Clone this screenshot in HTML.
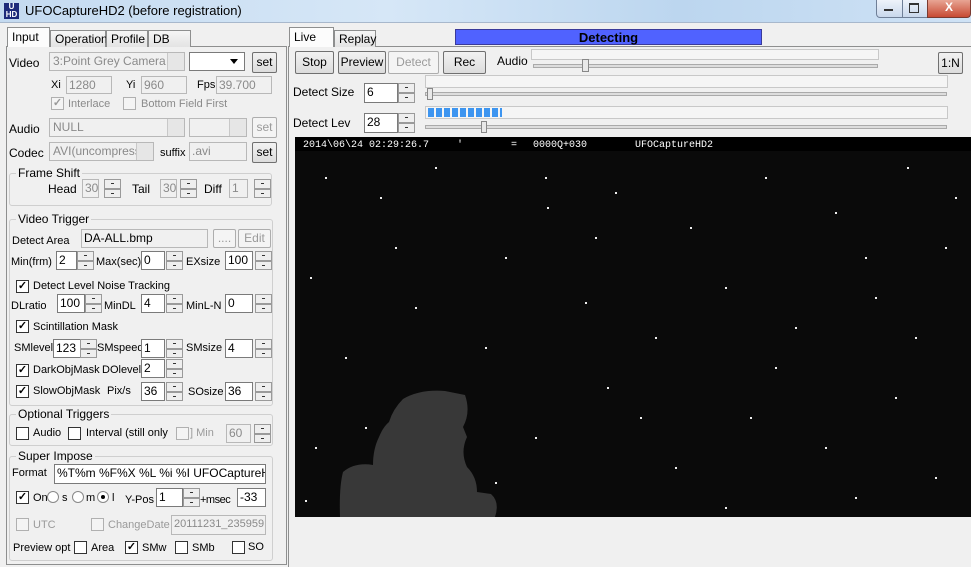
<!DOCTYPE html>
<html><head><meta charset="utf-8"><style>
body{margin:0;width:971px;height:567px;background:#f0f0f0;font:11px "Liberation Sans",sans-serif;position:relative;overflow:hidden;color:#000}
.a{position:absolute;white-space:nowrap;line-height:14px}
.e{position:absolute;background:#fff;border:1px solid #7a7a7a;box-sizing:border-box;padding:1px 2px;line-height:15px;font-size:12px;white-space:nowrap;overflow:hidden}
.d{background:#f0f0f0;border-color:#b8b8b8;color:#8a8a8a}
.b{position:absolute;box-sizing:border-box;border:1px solid #707070;border-radius:2px;background:linear-gradient(#f2f2f2,#dcdcdc);text-align:center;font-size:12px;white-space:nowrap}
.bd{color:#9a9a9a;border-color:#adadad;background:#f4f4f4}
.sp{position:absolute;width:17px;box-sizing:border-box}
.sp i{display:block;box-sizing:border-box;border:1px solid #9a9a9a;background:#eee;height:50%;position:relative}
.sp i:after{content:"";position:absolute;left:6px;top:3px;width:3px;height:1px;background:#333}
.cb{position:absolute;width:13px;height:13px;box-sizing:border-box;border:1px solid #333;background:#fff;font-size:11px;line-height:11px;text-align:center;font-weight:bold}
.cbd{border-color:#b0b0b0;background:#f4f4f4;color:#999}
.g{position:absolute;border:1px solid #cfcfcf;border-radius:3px;box-sizing:border-box}
.gt{position:absolute;background:#f0f0f0;padding:0 2px;line-height:14px;top:-8px;left:6px;font-size:12px}
.rd{position:absolute;width:12px;height:12px;border:1px solid #888;border-radius:50%;box-sizing:border-box;background:#fff}
.cmb{position:absolute;box-sizing:border-box;border:1px solid #b8b8b8;background:#f0f0f0;color:#8a8a8a;padding:1px 3px;line-height:15px;overflow:hidden;font-size:12px}
.cmb:after{content:"";position:absolute;right:0;top:0;bottom:0;width:16px;background:#e6e6e6;border-left:1px solid #c8c8c8}
.tab{position:absolute;box-sizing:border-box;border:1px solid #8e8f8f;border-bottom:none;background:linear-gradient(#f6f6f6,#e3e3e3);padding:2px 4px;line-height:14px;font-size:12px}
.sel{background:#fcfcfc;z-index:2}
</style></head><body>
<div class="a" style="left:0;top:0;width:971px;height:22px;background:linear-gradient(90deg,#c4daf0,#d6e7f7 40%,#bcd6ef 70%,#cfe2f5)"></div>
<div class="a" style="left:4px;top:3px;width:15px;height:16px;background:#1d2a7a;color:#fff;font-size:8px;line-height:8px;text-align:center;font-weight:bold">U<br>HD</div>
<div class="a" style="left:25px;top:3px;font-size:13px;line-height:16px">UFOCaptureHD2 (before registration)</div>
<div class="a" style="left:876px;top:0;width:25px;height:17px;border:1px solid #6f7f97;border-top:none;border-radius:0 0 0 4px;background:linear-gradient(#eef3fa,#c9d8ec)"></div>
<div class="a" style="left:902px;top:0;width:24px;height:17px;border:1px solid #6f7f97;border-top:none;background:linear-gradient(#eef3fa,#c9d8ec)"></div>
<div class="a" style="left:927px;top:0;width:42px;height:17px;border:1px solid #7a3a30;border-top:none;border-radius:0 0 4px 0;background:linear-gradient(#e8a594,#c74a33);color:#fff;font-weight:bold;text-align:center;line-height:14px;font-size:12px">X</div>
<div class="a" style="left:884px;top:9px;width:9px;height:2px;background:#333"></div>
<div class="a" style="left:909px;top:3px;width:8px;height:7px;border:1px solid #333;border-top-width:2px"></div>
<div class="a" style="left:0;top:22px;width:971px;height:1px;background:#a8b8cc"></div>

<div class="a" style="left:6px;top:46px;width:281px;height:519px;border:1px solid #8e8f8f;box-sizing:border-box;background:#f0f0f0"></div>
<div class="tab sel" style="left:7px;top:27px;width:43px;height:20px">Input</div>
<div class="tab" style="left:50px;top:30px;width:56px;height:17px;padding-top:1px">Operation</div>
<div class="tab" style="left:106px;top:30px;width:42px;height:17px;padding-top:1px">Profile</div>
<div class="tab" style="left:148px;top:30px;width:43px;height:17px;padding-top:1px">DB</div>

<div class="a" style="left:9px;top:56px;font-size:12px">Video</div>
<div class="cmb" style="left:49px;top:52px;width:136px;height:19px">3:Point Grey Camera</div>
<div class="e" style="left:189px;top:52px;width:56px;height:19px"></div>
<div class="a" style="left:230px;top:59px;width:0;height:0;border:4px solid transparent;border-top:5px solid #000"></div>
<div class="b" style="left:252px;top:52px;width:25px;height:21px;line-height:19px">set</div>
<div class="a" style="left:51px;top:78px">Xi</div><div class="e d" style="left:66px;top:76px;width:46px;height:18px">1280</div>
<div class="a" style="left:126px;top:78px">Yi</div><div class="e d" style="left:141px;top:76px;width:46px;height:18px">960</div>
<div class="a" style="left:197px;top:78px">Fps</div><div class="e d" style="left:216px;top:76px;width:56px;height:18px">39.700</div>
<div class="cb cbd" style="left:51px;top:97px">✓</div><div class="a" style="left:68px;top:97px;color:#8a8a8a">Interlace</div>
<div class="cb cbd" style="left:123px;top:97px"></div><div class="a" style="left:141px;top:97px;color:#8a8a8a">Bottom Field First</div>
<div class="a" style="left:9px;top:122px;font-size:12px">Audio</div>
<div class="cmb" style="left:49px;top:118px;width:136px;height:19px">NULL</div>
<div class="cmb" style="left:189px;top:118px;width:58px;height:19px"></div>
<div class="b bd" style="left:252px;top:117px;width:25px;height:21px;line-height:19px">set</div>
<div class="a" style="left:9px;top:146px;font-size:12px">Codec</div>
<div class="cmb" style="left:49px;top:142px;width:105px;height:19px">AVI(uncompressed</div>
<div class="a" style="left:160px;top:146px">suffix</div>
<div class="e d" style="left:189px;top:142px;width:58px;height:19px">.avi</div>
<div class="b" style="left:252px;top:142px;width:25px;height:21px;line-height:19px">set</div>

<div class="g" style="left:9px;top:173px;width:263px;height:33px"><span class="gt">Frame Shift</span></div>
<div class="a" style="left:48px;top:182px;font-size:12px">Head</div><div class="e d" style="left:82px;top:179px;width:17px;height:19px">30</div><div class="sp" style="left:104px;top:179px;height:19px"><i></i><i></i></div>
<div class="a" style="left:132px;top:182px;font-size:12px">Tail</div><div class="e d" style="left:160px;top:179px;width:17px;height:19px">30</div><div class="sp" style="left:180px;top:179px;height:19px"><i></i><i></i></div>
<div class="a" style="left:204px;top:182px;font-size:12px">Diff</div><div class="e d" style="left:229px;top:179px;width:19px;height:19px">1</div><div class="sp" style="left:254px;top:179px;height:19px"><i></i><i></i></div>

<div class="g" style="left:9px;top:219px;width:264px;height:187px"><span class="gt">Video Trigger</span></div>
<div class="a" style="left:12px;top:234px">Detect Area</div><div class="e d" style="left:81px;top:229px;width:127px;height:19px;color:#000">DA-ALL.bmp</div>
<div class="b bd" style="left:213px;top:229px;width:23px;height:19px;line-height:17px">....</div>
<div class="b bd" style="left:238px;top:229px;width:33px;height:19px;line-height:17px">Edit</div>
<div class="a" style="left:11px;top:255px">Min(frm)</div><div class="e" style="left:56px;top:251px;width:21px;height:19px">2</div><div class="sp" style="left:77px;top:251px;height:19px"><i></i><i></i></div>
<div class="a" style="left:96px;top:255px">Max(sec)</div><div class="e" style="left:141px;top:251px;width:24px;height:19px">0</div><div class="sp" style="left:166px;top:251px;height:19px"><i></i><i></i></div>
<div class="a" style="left:186px;top:255px">EXsize</div><div class="e" style="left:225px;top:251px;width:28px;height:19px">100</div><div class="sp" style="left:255px;top:251px;height:19px"><i></i><i></i></div>
<div class="cb" style="left:16px;top:280px">✓</div><div class="a" style="left:33px;top:279px">Detect Level Noise Tracking</div>
<div class="a" style="left:11px;top:299px">DLratio</div><div class="e" style="left:57px;top:294px;width:28px;height:19px">100</div><div class="sp" style="left:85px;top:294px;height:19px"><i></i><i></i></div>
<div class="a" style="left:104px;top:299px">MinDL</div><div class="e" style="left:141px;top:294px;width:24px;height:19px">4</div><div class="sp" style="left:166px;top:294px;height:19px"><i></i><i></i></div>
<div class="a" style="left:186px;top:299px">MinL-N</div><div class="e" style="left:225px;top:294px;width:28px;height:19px">0</div><div class="sp" style="left:255px;top:294px;height:19px"><i></i><i></i></div>
<div class="cb" style="left:16px;top:320px">✓</div><div class="a" style="left:33px;top:320px">Scintillation Mask</div>
<div class="a" style="left:14px;top:341px">SMlevel</div><div class="e" style="left:53px;top:339px;width:28px;height:19px">123</div><div class="sp" style="left:80px;top:339px;height:19px"><i></i><i></i></div>
<div class="a" style="left:97px;top:341px">SMspeed</div><div class="e" style="left:141px;top:339px;width:24px;height:19px">1</div><div class="sp" style="left:166px;top:339px;height:19px"><i></i><i></i></div>
<div class="a" style="left:186px;top:341px">SMsize</div><div class="e" style="left:225px;top:339px;width:28px;height:19px">4</div><div class="sp" style="left:255px;top:339px;height:19px"><i></i><i></i></div>
<div class="cb" style="left:16px;top:364px">✓</div><div class="a" style="left:33px;top:363px">DarkObjMask</div>
<div class="a" style="left:102px;top:363px">DOlevel</div><div class="e" style="left:141px;top:359px;width:24px;height:19px">2</div><div class="sp" style="left:166px;top:359px;height:19px"><i></i><i></i></div>
<div class="cb" style="left:16px;top:385px">✓</div><div class="a" style="left:33px;top:384px">SlowObjMask</div>
<div class="a" style="left:107px;top:384px">Pix/s</div><div class="e" style="left:141px;top:382px;width:24px;height:19px">36</div><div class="sp" style="left:166px;top:382px;height:19px"><i></i><i></i></div>
<div class="a" style="left:188px;top:385px">SOsize</div><div class="e" style="left:225px;top:382px;width:28px;height:19px">36</div><div class="sp" style="left:255px;top:382px;height:19px"><i></i><i></i></div>

<div class="g" style="left:9px;top:414px;width:264px;height:32px"><span class="gt">Optional Triggers</span></div>
<div class="cb" style="left:16px;top:427px"></div><div class="a" style="left:33px;top:426px">Audio</div>
<div class="cb" style="left:68px;top:427px"></div><div class="a" style="left:86px;top:426px">Interval (still only</div>
<div class="cb cbd" style="left:176px;top:427px"></div><div class="a" style="left:190px;top:426px;color:#9a9a9a">] Min</div>
<div class="e d" style="left:226px;top:424px;width:25px;height:19px">60</div><div class="sp" style="left:254px;top:424px;height:19px"><i></i><i></i></div>

<div class="g" style="left:9px;top:456px;width:264px;height:105px"><span class="gt">Super Impose</span></div>
<div class="a" style="left:12px;top:466px">Format</div><div class="e" style="left:54px;top:464px;width:212px;height:20px">%T%m %F%X %L %i %I UFOCaptureHD2</div>
<div class="cb" style="left:16px;top:491px">✓</div><div class="a" style="left:33px;top:491px">On</div>
<div class="rd" style="left:47px;top:491px"></div><div class="a" style="left:62px;top:491px">s</div>
<div class="rd" style="left:72px;top:491px"></div><div class="a" style="left:86px;top:491px">m</div>
<div class="rd" style="left:97px;top:491px"><div class="a" style="left:3px;top:3px;width:4px;height:4px;border-radius:50%;background:#000"></div></div><div class="a" style="left:112px;top:491px">l</div>
<div class="a" style="left:125px;top:493px">Y-Pos</div><div class="e" style="left:156px;top:488px;width:27px;height:19px">1</div><div class="sp" style="left:183px;top:488px;height:19px"><i></i><i></i></div>
<div class="a" style="left:200px;top:493px;letter-spacing:-.5px">+msec</div><div class="e" style="left:237px;top:488px;width:29px;height:19px">-33</div>
<div class="cb cbd" style="left:16px;top:518px"></div><div class="a" style="left:33px;top:518px;color:#9a9a9a">UTC</div>
<div class="cb cbd" style="left:91px;top:518px"></div><div class="a" style="left:108px;top:518px;color:#9a9a9a">ChangeDate</div>
<div class="e d" style="left:171px;top:515px;width:95px;height:20px;font-size:11px">20111231_235959</div>
<div class="a" style="left:13px;top:541px">Preview opt</div>
<div class="cb" style="left:74px;top:541px"></div><div class="a" style="left:91px;top:541px">Area</div>
<div class="cb" style="left:125px;top:541px">✓</div><div class="a" style="left:142px;top:541px">SMw</div>
<div class="cb" style="left:175px;top:541px"></div><div class="a" style="left:192px;top:541px">SMb</div>
<div class="cb" style="left:232px;top:541px"></div><div class="a" style="left:248px;top:540px">SO</div>

<div class="a" style="left:288px;top:46px;width:683px;height:521px;border-left:1px solid #8e8f8f;border-top:1px solid #8e8f8f;box-sizing:border-box;background:#f0f0f0"></div>
<div class="tab sel" style="left:289px;top:27px;width:45px;height:20px">Live</div>
<div class="tab" style="left:334px;top:30px;width:42px;height:17px;padding-top:1px">Replay</div>
<div class="a" style="left:455px;top:29px;width:307px;height:16px;background:#5062ff;border:1px solid #3a3a9a;box-sizing:border-box;text-align:center;font-weight:bold;font-size:13px;line-height:16px">Detecting</div>
<div class="b" style="left:295px;top:51px;width:39px;height:23px;line-height:21px">Stop</div>
<div class="b" style="left:338px;top:51px;width:48px;height:23px;line-height:21px">Preview</div>
<div class="b bd" style="left:388px;top:51px;width:51px;height:23px;line-height:21px">Detect</div>
<div class="b" style="left:443px;top:51px;width:43px;height:23px;line-height:21px">Rec</div>
<div class="a" style="left:497px;top:54px;font-size:12px">Audio</div>
<div class="a" style="left:531px;top:49px;width:346px;height:9px;border:1px solid #c8c8c8;background:#f5f5f5"></div>
<div class="a" style="left:533px;top:64px;width:343px;height:2px;border:1px solid #aaa;background:#ddd"></div>
<div class="a" style="left:582px;top:59px;width:5px;height:11px;border:1px solid #888;background:#e8e8e8"></div>
<div class="b" style="left:938px;top:52px;width:25px;height:22px;line-height:20px">1:N</div>

<div class="a" style="left:293px;top:85px;font-size:12px">Detect Size</div>
<div class="e" style="left:364px;top:83px;width:34px;height:20px">6</div><div class="sp" style="left:398px;top:83px;height:20px"><i></i><i></i></div>
<div class="a" style="left:425px;top:75px;width:521px;height:11px;border:1px solid #c8c8c8;background:#f5f5f5"></div>
<div class="a" style="left:425px;top:92px;width:520px;height:2px;border:1px solid #aaa;background:#ddd"></div>
<div class="a" style="left:427px;top:88px;width:4px;height:10px;border:1px solid #888;background:#e8e8e8"></div>

<div class="a" style="left:293px;top:116px;font-size:12px">Detect Lev</div>
<div class="e" style="left:364px;top:113px;width:34px;height:20px">28</div><div class="sp" style="left:398px;top:113px;height:20px"><i></i><i></i></div>
<div class="a" style="left:425px;top:106px;width:521px;height:11px;border:1px solid #c8c8c8;background:#f5f5f5"></div>
<div class="a" style="left:428px;top:108px;width:74px;height:9px;background:repeating-linear-gradient(90deg,#3d95f0 0 6px,transparent 6px 8px)"></div>
<div class="a" style="left:425px;top:125px;width:520px;height:2px;border:1px solid #aaa;background:#ddd"></div>
<div class="a" style="left:481px;top:121px;width:4px;height:10px;border:1px solid #888;background:#e8e8e8"></div>

<svg class="a" style="left:295px;top:137px" width="676" height="380" viewBox="0 0 676 380">
<rect width="676" height="380" fill="#0a0a0a"/>
<rect width="676" height="14" fill="#000"/>
<g fill="#fff" font-family="Liberation Mono" font-size="10">
<text x="8" y="10">2014\06\24 02:29:26.7</text>
<text x="162" y="10">'</text>
<text x="216" y="10">=</text>
<text x="238" y="10">0000Q+030</text>
<text x="340" y="10">UFOCaptureHD2</text>
</g>
<g fill="#eee">
<rect x="30" y="40" width="2" height="2"/><rect x="85" y="60" width="2" height="2"/><rect x="140" y="30" width="2" height="2"/><rect x="252" y="70" width="2" height="2"/><rect x="210" y="120" width="2" height="2"/><rect x="320" y="55" width="2" height="2"/><rect x="395" y="90" width="2" height="2"/><rect x="470" y="40" width="2" height="2"/><rect x="540" y="75" width="2" height="2"/><rect x="612" y="30" width="2" height="2"/><rect x="650" y="110" width="2" height="2"/><rect x="580" y="160" width="2" height="2"/><rect x="500" y="190" width="2" height="2"/><rect x="430" y="150" width="2" height="2"/><rect x="360" y="200" width="2" height="2"/><rect x="290" y="165" width="2" height="2"/><rect x="190" y="210" width="2" height="2"/><rect x="120" y="170" width="2" height="2"/><rect x="50" y="220" width="2" height="2"/><rect x="15" y="140" width="2" height="2"/><rect x="70" y="290" width="2" height="2"/><rect x="150" y="260" width="2" height="2"/><rect x="240" y="300" width="2" height="2"/><rect x="312" y="250" width="2" height="2"/><rect x="380" y="330" width="2" height="2"/><rect x="455" y="280" width="2" height="2"/><rect x="530" y="310" width="2" height="2"/><rect x="600" y="260" width="2" height="2"/><rect x="640" y="340" width="2" height="2"/><rect x="560" y="360" width="2" height="2"/><rect x="430" y="370" width="2" height="2"/><rect x="20" y="310" width="2" height="2"/><rect x="10" y="363" width="2" height="2"/><rect x="300" y="100" width="2" height="2"/><rect x="620" y="200" width="2" height="2"/><rect x="100" y="110" width="2" height="2"/><rect x="250" y="40" width="2" height="2"/><rect x="480" y="230" width="2" height="2"/><rect x="345" y="280" width="2" height="2"/><rect x="200" y="345" width="2" height="2"/><rect x="660" y="60" width="2" height="2"/><rect x="570" y="120" width="2" height="2"/>
</g>
<path d="M108 262 Q125 252 150 254 L170 258 Q176 275 168 290 L172 300 Q165 315 172 330 Q182 340 182 355 L196 357 Q205 365 200 380 L45 380 Q44 350 48 335 Q60 325 78 328 Q78 312 84 300 Q88 290 94 285 Q98 272 108 262Z" fill="#383838"/>
</svg>
</body></html>
